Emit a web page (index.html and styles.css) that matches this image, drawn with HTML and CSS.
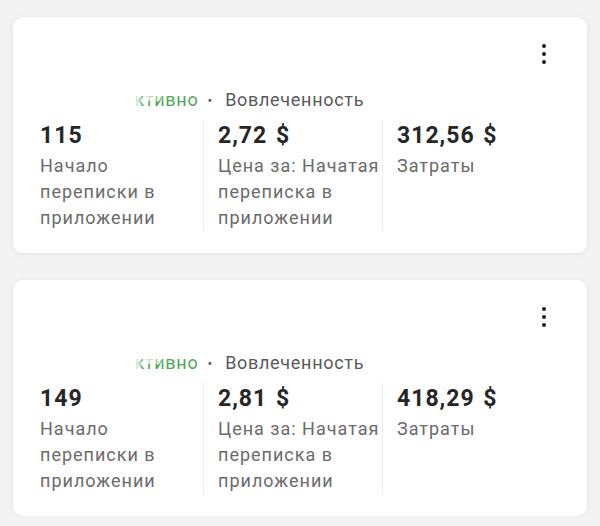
FILE: index.html
```html
<!DOCTYPE html>
<html lang="ru">

<head>
    <meta charset="UTF-8">
    <meta name="viewport" content="width=device-width, initial-scale=1.0">
    <title>Кампании</title>
    <link rel="stylesheet" href="styles.css">
</head>

<body>
    <!-- Кампания 1 -->
    <div class="card">
        <div class="menu"><span></span><span></span><span></span></div>
        <div class="status">
            <span class="status-active">Активно</span>
            <span class="status-sep">•</span>
            <span class="status-goal">Вовлеченность</span>
            <span class="erase"></span>
        </div>
        <div class="metrics">
            <div class="metric">
                <div class="metric-value">115</div>
                <div class="metric-label">Начало переписки в приложении</div>
            </div>
            <div class="metric">
                <div class="metric-value">2,72 $</div>
                <div class="metric-label">Цена за: Начатая переписка в приложении</div>
            </div>
            <div class="metric">
                <div class="metric-value">312,56 $</div>
                <div class="metric-label">Затраты</div>
            </div>
        </div>
    </div>

    <!-- Кампания 2 -->
    <div class="card">
        <div class="menu"><span></span><span></span><span></span></div>
        <div class="status">
            <span class="status-active">Активно</span>
            <span class="status-sep">•</span>
            <span class="status-goal">Вовлеченность</span>
            <span class="erase"></span>
        </div>
        <div class="metrics">
            <div class="metric">
                <div class="metric-value">149</div>
                <div class="metric-label">Начало переписки в приложении</div>
            </div>
            <div class="metric">
                <div class="metric-value">2,81 $</div>
                <div class="metric-label">Цена за: Начатая переписка в приложении</div>
            </div>
            <div class="metric">
                <div class="metric-value">418,29 $</div>
                <div class="metric-label">Затраты</div>
            </div>
        </div>
    </div>
</body>

</html>
```

FILE: styles.css
```css
body {
    font-family: Roboto, "Liberation Sans", Arial, sans-serif;
    background-color: #f3f3f3;
    margin: 0;
    padding: 17px 13px 0;
}

.card {
    position: relative;
    background-color: #fff;
    border-radius: 10px;
    box-shadow: 0 1px 6px rgba(0, 0, 0, 0.07);
    padding: 71px 20px 22px 27px;
}

.card + .card {
    margin-top: 27px;
}

.menu {
    position: absolute;
    top: 27px;
    right: 41px;
    display: flex;
    flex-direction: column;
    gap: 4px;
}

.menu span {
    width: 4px;
    height: 4px;
    border-radius: 50%;
    background-color: #1e1e1e;
}

.status {
    position: relative;
    height: 24px;
    line-height: 24px;
    font-size: 18px;
    letter-spacing: 0.7px;
    padding-left: 82px;
    color: #5a5a5a;
}

.status-active {
    color: #52a556;
}

.status-sep {
    margin: 0 7px 0 4px;
    font-size: 14px;
}

/* затёртая часть скриншота */
.erase {
    position: absolute;
    left: 0;
    top: 0;
    width: 103px;
    height: 24px;
    background: linear-gradient(to right, #fff 0, #fff 90%, rgba(255, 255, 255, 0.6) 96%, rgba(255, 255, 255, 0) 100%);
}

.erase::after {
    content: "";
    position: absolute;
    left: 100%;
    top: 0;
    width: 26px;
    height: 13px;
    background: linear-gradient(to right, rgba(255, 255, 255, 0.9), rgba(255, 255, 255, 0));
}

.metrics {
    display: grid;
    grid-template-columns: 163px 179px 1fr;
    margin-top: 8px;
}

.metric + .metric {
    border-left: 1px solid #ececec;
    padding-left: 14px;
}

.metric-value {
    font-size: 23px;
    font-weight: bold;
    line-height: 28px;
    margin: 2px 0 3px;
    color: #262626;
    letter-spacing: 1px;
    word-spacing: 2px;
}

.metric-label {
    font-size: 18px;
    line-height: 26px;
    color: #6b6b6b;
    letter-spacing: 1px;
}
```
